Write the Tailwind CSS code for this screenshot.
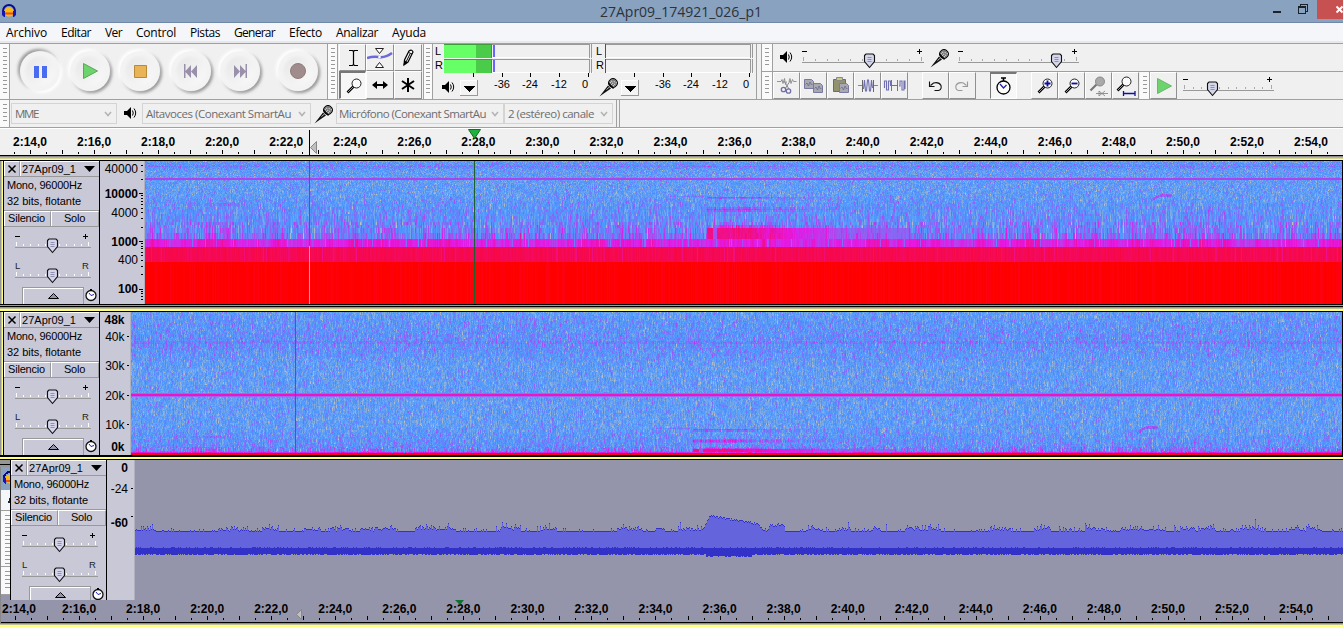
<!DOCTYPE html>
<html lang="es">
<head>
<meta charset="utf-8">
<title>27Apr09_174921_026_p1</title>
<script src="https://cdn.jsdelivr.net/npm/@tailwindcss/browser@4"></script>
</head>
<body class="w-[1343px] h-[627px] overflow-hidden bg-[#f0f0f0] font-['Liberation_Sans',sans-serif] text-black flex flex-col">

<svg class="hidden">
  <symbol id="speaker" viewBox="0 0 14 14"><path d="M1 5h3l4-4v12l-4-4H1z" fill="#000"/><path d="M9.500 4.500q1.500 2.500 0 5M11 2.500q3.400 4.500 0 9" fill="none" stroke="#000"/></symbol>
  <symbol id="mic" viewBox="0 0 20 20"><path d="M.5 19.500L9 8.500l3 3L4 17z" fill="#111"/><path d="M7.500 12.500l3.500-3" stroke="#bbb"/><circle cx="14" cy="6" r="4.500" fill="#777" stroke="#000"/><path d="M11 6l3-3M12 8l4-4M14 9l4-4" stroke="#eee" stroke-width="1.100" stroke-dasharray="1 1"/><path d="M9.500 6l5 5.500" stroke="#000" stroke-width="1.300"/></symbol>
  <symbol id="lens" viewBox="0 0 27 27"><path d="M7.500 19.500L14 13" stroke="#000" stroke-width="2.600"/><path d="M8 19L14 13" stroke="#aaa" stroke-width=".9"/><circle cx="16.500" cy="10.500" r="4.500" fill="#fafafa" stroke="#222" stroke-width="1"/></symbol>
  <symbol id="logo" viewBox="0 0 16 16"><circle cx="8" cy="9" r="4.700" fill="#fcb813"/><path d="M4 9.500h8v2H4z" fill="#ee4b1a"/><path d="M2 10V8a6 6 0 0 1 12 0v2" fill="none" stroke="#0a0a8c" stroke-width="2"/><path d="M1 8h3v6H3L1 12zM15 8h-3v6h1l2-2z" fill="#1616b4"/></symbol>
</svg>

<!-- Title bar -->
<header class="h-[23px] shrink-0 bg-[#88a2c0] border-b border-[#7088a8] flex items-start">
  <svg class="w-4 h-4 ml-px mt-[3px]"><use href="#logo"/></svg>
  <h1 class="flex-1 pl-[583px] text-[14px] leading-[23px] font-['Open_Sans',sans-serif] text-[#2d3239] whitespace-nowrap"><span data-w="162">27Apr09_174921_026_p1</span></h1>
  <svg class="w-[74px] h-[23px]" shape-rendering="crispEdges"><path d="M4 11h8v2H4z" fill="#1c222a"/><path d="M29.500 6.500h7v7h-7zM31.500 6v-1.500h7v7H37M29 7.500h8" fill="none" stroke="#1c222a"/><path d="M48 0h26v19H48z" fill="#c75050"/><path d="M67.500 6.500l6 6m-6 0l6-6" stroke="#fff" stroke-width="2" shape-rendering="auto"/></svg>
</header>

<!-- Menu -->
<nav class="h-[20px] shrink-0 bg-[#f5f6f9] border-b-2 border-[#e8e8ea] flex pl-[6px] text-[12px] leading-[20px] font-['Open_Sans',sans-serif] whitespace-nowrap">
  <div class="w-[55px]"><span data-w="41">Archivo</span></div>
  <div class="w-[44px]"><span data-w="30">Editar</span></div>
  <div class="w-[31px]"><span data-w="17">Ver</span></div>
  <div class="w-[54px]"><span data-w="40">Control</span></div>
  <div class="w-[44px]"><span data-w="30">Pistas</span></div>
  <div class="w-[55px]"><span data-w="41">Generar</span></div>
  <div class="w-[47px]"><span data-w="33">Efecto</span></div>
  <div class="w-[56px]"><span data-w="42">Analizar</span></div>
  <div><span data-w="34">Ayuda</span></div>
</nav>

<!-- Toolbars -->
<section class="h-[57px] shrink-0 border-t border-b border-[#a0a0a0] flex">
  <div class="w-[10px] bg-[#fafafa] border-r border-[#a0a0a0] pt-[4px] pl-[3px]"><div class="w-[4px] h-[47px] bg-[repeating-linear-gradient(#999_0_1px,transparent_1px_4px)]"></div></div>
  <div class="w-[318px] border-r border-[#a0a0a0]" id="transport"></div>
  <div class="w-[10px] bg-[#fafafa] border-r border-[#a0a0a0] pt-[4px] pl-[3px]"><div class="w-[4px] h-[47px] bg-[repeating-linear-gradient(#999_0_1px,transparent_1px_4px)]"></div></div>
  <!-- Edit tools -->
  <div class="w-[86px] pl-px grid grid-cols-[27px_28px_28px] grid-rows-[27px_28px] border-r border-[#a0a0a0]">
    <div class="border-t border-l border-white border-r border-b border-r-[#909090] border-b-[#909090]"><svg class="w-[26px] h-[26px]"><path d="M9 5.500h3.500l1 1 1-1H18M13.500 6v14M9 20.500h3.500l1-1 1 1H18" fill="none" stroke="#000" stroke-width="1.200"/></svg></div>
    <div class="border-t border-l border-white border-r border-b border-r-[#909090] border-b-[#909090]"><svg class="w-[26px] h-[26px]"><path d="M0 13q6-2 12-1t13-4" fill="none" stroke="#6a6ad8" stroke-width="2.500"/><path d="M8.500 3.500h8l-4 5zM8.500 22.500h8l-4-5z" fill="#fff" stroke="#222"/><circle cx="12.500" cy="12" r="1.300" fill="#fff"/></svg></div>
    <div class="border-t border-l border-white border-r border-b border-r-[#909090] border-b-[#909090]"><svg class="w-[26px] h-[26px]"><path d="M9 20l.5-5L14 6q3-2 4 1l-5 10z" fill="#fff" stroke="#000" stroke-width="1.200"/><path d="M9 20l1-4 2 1zM13.500 7.500l3.500 1.500M15 9l-3.500 7" stroke="#000"/></svg></div>
    <div class="border-t-2 border-l-2 border-[#777] border-r border-b border-r-white border-b-white bg-[#f7f7f7]"><svg class="w-[25px] h-[25px]" viewBox="1 0 25 25"><use href="#lens" width="27" height="27"/></svg></div>
    <div class="border-t border-l border-white border-r border-b border-r-[#909090] border-b-[#909090]"><svg class="w-[26px] h-[26px]"><path d="M6 13h14" stroke="#000" stroke-width="2"/><path d="M5 13l5-4v8zM21 13l-5-4v8z"/></svg></div>
    <div class="border-t border-l border-white border-r border-b border-r-[#909090] border-b-[#909090]"><svg class="w-[26px] h-[26px]"><path d="M13 6v14M7 9l12 8M7 17l12-8" stroke="#000" stroke-width="2"/></svg></div>
  </div>
  <div class="w-[9px] bg-[#fafafa] border-r border-[#a0a0a0] pt-[4px] pl-[2px]"><div class="w-[4px] h-[47px] bg-[repeating-linear-gradient(#999_0_1px,transparent_1px_4px)]"></div></div>
  <!-- Level meters -->
  <svg class="w-[328px] h-[55px] shrink-0" viewBox="-0.5 0 328 55" id="meters"></svg>
  <!-- Mixer, edit, transcription -->
  <div class="flex-1 flex flex-col border-l border-[#a0a0a0]">
    <div class="h-[28px] flex border-b border-[#a0a0a0]">
      <div class="w-[11px] bg-[#fafafa] border-r border-[#a0a0a0] pt-[4px] pl-[3px]"><div class="w-[4px] h-[20px] bg-[repeating-linear-gradient(#999_0_1px,transparent_1px_4px)]"></div></div>
      <svg class="w-[14px] h-[14px] ml-[6px] mt-[6px]"><use href="#speaker"/></svg>
      <svg class="w-[137px] h-[26px]" data-slider="9,131,18,76,13"></svg>
      <svg class="w-[20px] h-[20px] mt-[4px]"><use href="#mic"/></svg>
      <svg class="w-[140px] h-[26px]" data-slider="8,129,18,106,13"></svg>
    </div>
    <div class="h-[27px] flex" id="editbar"></div>
  </div>
</section>

<section class="h-[28px] shrink-0 border-b border-[#a0a0a0] flex text-[11.5px] text-[#6d6d6d] font-['Open_Sans',sans-serif] whitespace-nowrap">
  <div class="w-[10px] bg-[#fafafa] border-r border-[#a0a0a0] pt-[4px] pl-[3px]"><div class="w-[4px] h-[19px] bg-[repeating-linear-gradient(#999_0_1px,transparent_1px_4px)]"></div></div>
  <div class="ml-px mt-[3px] w-[106px] h-[21px] border border-[#d4d4d4] flex items-center justify-between pl-[3px] pr-[4px]"><span data-w="23">MME</span><svg class="w-[8px] h-[6px] shrink-0"><path d="M1 1l3 3.500L7 1" fill="none" stroke="#b4b4b4" stroke-width="1.600"/></svg></div>
  <svg class="w-[14px] h-[14px] ml-[6px] mt-[6px]"><use href="#speaker"/></svg>
  <div class="ml-[5px] mt-[3px] w-[169px] h-[21px] border border-[#d4d4d4] flex items-center justify-between pl-[3px] pr-[4px]"><span data-w="145">Altavoces (Conexant SmartAu</span><svg class="w-[8px] h-[6px] shrink-0"><path d="M1 1l3 3.500L7 1" fill="none" stroke="#b4b4b4" stroke-width="1.600"/></svg></div>
  <svg class="w-[20px] h-[20px] ml-[3px] mt-[4px]"><use href="#mic"/></svg>
  <div class="ml-[2px] mt-[3px] w-[168px] h-[21px] border border-[#d4d4d4] flex items-center justify-between pl-[2px] pr-[4px]"><span data-w="147">Micrófono (Conexant SmartAu</span><svg class="w-[8px] h-[6px] shrink-0"><path d="M1 1l3 3.500L7 1" fill="none" stroke="#b4b4b4" stroke-width="1.600"/></svg></div>
  <div class="mt-[3px] w-[109px] h-[21px] border border-[#d4d4d4] flex items-center justify-between pl-[3px] pr-[4px]"><span data-w="86">2 (estéreo) canale</span><svg class="w-[8px] h-[6px] shrink-0"><path d="M1 1l3 3.500L7 1" fill="none" stroke="#b4b4b4" stroke-width="1.600"/></svg></div>
  <div class="ml-[3px] w-[4px] border-x border-[#a0a0a0]"></div>
</section>

<!-- Timeline -->
<svg class="w-full h-[28px] shrink-0 border-t border-white" id="timeline"></svg>

<!-- Track 1 -->
<div class="h-[5px] shrink-0 bg-[linear-gradient(#8c8c8c_0_1px,#b4b4a0_1px_2px,#d6d68c_2px_3px,#ffff80_3px_4px,#000_4px)]"></div>
<section class="h-[143px] shrink-0 flex">
  <div class="w-[4px] bg-[linear-gradient(to_right,#969696_0_1px,#c4c49a_1px_2px,#ffff80_2px_3px,#000_3px)]"></div>
  <div class="w-[95px] bg-[#c8c8d7] overflow-hidden" data-panel></div>
  <svg class="w-[46px] h-[143px] bg-[#c8c8d7] border-l border-black" id="scale1"></svg>
  <canvas id="spec1" width="1197" height="143" class="w-[1198px] h-[143px] border-r border-black"></canvas>
</section>
<div class="h-[8px] shrink-0 bg-[linear-gradient(#000_0_1px,#9c9c9c_1px_2px,#000_2px_3px,#969696_3px_4px,#c0c098_4px_5px,#ffff80_5px_7px,#000_7px)]"></div>

<!-- Track 2 -->
<section class="h-[143px] shrink-0 flex">
  <div class="w-[4px] bg-[linear-gradient(to_right,#969696_0_1px,#c4c49a_1px_2px,#ffff80_2px_3px,#000_3px)]"></div>
  <div class="w-[95px] bg-[#c8c8d7] overflow-hidden" data-panel></div>
  <svg class="w-[32px] h-[143px] bg-[#c8c8d7] border-l border-black" id="scale2"></svg>
  <canvas id="spec2" width="1211" height="143" class="w-[1212px] h-[143px] border-r border-black"></canvas>
</section>
<div class="h-[5px] shrink-0 bg-[linear-gradient(#000_0_2px,#ffff80_2px_4px,#000_4px)]"></div>

<!-- Track 3 -->
<section class="h-[140px] shrink-0 flex bg-[#9494aa]">
  <svg class="w-[10px] h-[140px] bg-[#f0f0f0]" shape-rendering="crispEdges">
    <path d="M0 0h10v7H0z" fill="#969696"/><path d="M0 4h10v1H0z"/><path d="M1 7h9v23H1z" fill="#88a2c0"/><path d="M1 30h9v20H1z" fill="#f5f6f9"/>
    <use href="#logo" x="2" y="10" width="16" height="16"/><path d="M8 43l2-6v6" fill="#222"/>
    <path d="M1 50h9v1H1zM1 106h9v1H1zM1 134h9v1H1z" fill="#a0a0a0"/><path d="M0 7h1v133H0z" fill="#888"/>
    <path d="M1 51h9v55H1zM1 107h9v27H1z" fill="#fafafa"/><path d="M7 55v49M7 111v20" stroke="#999" stroke-width="5" stroke-dasharray="1 3"/>
    <path d="M1 135h9v5H1z" fill="#9494aa"/>
  </svg>
  <div class="w-[96px] bg-[#c8c8d7] border-l border-black overflow-hidden" data-panel></div>
  <svg class="w-[29px] h-[140px] bg-[#c8c8d7] border-l border-black" id="scale3"></svg>
  <canvas id="wave" width="1208" height="140" class="w-[1208px] h-[140px]"></canvas>
</section>
<svg class="w-full h-[23px] shrink-0 bg-[#9494aa]" id="timeline2"></svg>
<div class="h-[4px] shrink-0 bg-[linear-gradient(#8c8c8c_0_1px,#c0c098_1px_2px,#ffff80_2px)]"></div>

<script>
const $ = id => document.getElementById(id);

/* Slider: x0..x1 groove at y, thumb at t */
function slider(x0, x1, y, t, n, tick, labels) {
  let s = `<g shape-rendering="crispEdges"><path d="M${x0} ${y}h${x1 - x0}v1h${x0 - x1}z" fill="#999"/>`;
  for (let i = 0; i < n; i++) {
    const x = Math.round(x0 + 1 + i * (x1 - x0 - 4) / (n - 1)), h = (i == 0 || i == n - 1) ? 5 : 3;
    s += `<path d="M${x} ${y - h}h1v${h - 1}h-1z" fill="${tick}"/>`;
  }
  s += '</g>' + labels;
  y += 1;
  return s + `<path d="M${t - 5} ${y - 7.500}l1.500-1.500h7l1.500 1.500v6l-5 6-5-6z" fill="#d4d4ea" stroke="#111" stroke-width="1.100"/><path d="M${t - 2} ${y - 5.500}h4M${t - 2} ${y - 3.500}h4M${t - 2} ${y - 1.500}h4" stroke="#8888a8" stroke-width=".9"/>`;
}
const signs = (x0, x1, y) => `<path d="M${x0} ${y}h5M${x1 - 6} ${y}h5M${x1 - 3.500} ${y - 2.500}v5" stroke="#000"/>`;

document.querySelectorAll('[data-panel]').forEach(p => {
  p.innerHTML = `
  <div class="h-[16px] flex border-b border-[#999]">
    <div class="w-[16px] border-t border-l border-white border-r border-r-[#999]"><svg class="w-[14px] h-[14px]"><path d="M3.500 3.500l7 7m0-7l-7 7" stroke="#000" stroke-width="1.500"/></svg></div>
    <div class="flex-1 border-t border-l border-white flex items-center justify-between pl-px pr-[4px] text-[11px] leading-[14px]"><span data-w="54">27Apr09_1</span><svg class="w-[11px] h-[6px] shrink-0"><path d="M0 0h11L5.500 6z"/></svg></div>
  </div>
  <div class="h-[34px] pl-[3px] text-[11px] leading-[16px] whitespace-nowrap border-b border-[#999]"><div><span data-w="75">Mono, 96000Hz</span></div><div><span data-w="74">32 bits, flotante</span></div></div>
  <div class="h-[16px] flex text-[11px] leading-[13px] text-center border-b border-[#999]">
    <div class="w-[47px] border-t border-l border-white border-r border-r-[#999] pr-[2px]"><span data-w="37">Silencio</span></div><div class="flex-1 border-t border-l border-white border-r border-r-[#999] pr-px"><span data-w="21">Solo</span></div>
  </div>
  <svg class="w-[95px] h-[60px]">${slider(11, 87, 20, 48.500, 11, '#fff', signs(11, 85, 9.500))}${slider(11, 87, 50, 48.500, 11, '#fff', '<text x="11" y="42" font-size="9.500" fill="#222">L</text><text x="78" y="42" font-size="9.500" fill="#222">R</text>')}</svg>
  <div class="flex pl-[18px]">
    <div class="w-[62px] h-[17px] border border-b-0 border-[#999] shadow-[inset_1px_1px_#fff]"><svg class="w-[60px] h-[16px]"><path d="M25.500 10.500h10l-5-5z" fill="#9494aa" stroke="#000"/></svg></div>
    <svg class="w-[14px] h-[16px]"><circle cx="7" cy="8.500" r="5" fill="#fff" stroke="#111" stroke-width="1.300"/><path d="M7 8.500L5 6m2 2.500l3-1" stroke="#22a"/><path d="M6 2h2v2H6z"/></svg>
  </div>`;
});

document.querySelectorAll('[data-slider]').forEach(e => {
  const [a, b, y, t, n] = e.dataset.slider.split(',').map(Number);
  e.innerHTML = slider(a, b, y, t + .5, 11, '#aaa', signs(a, b - 1, 7.500));
});

/* Transport buttons */
{
  let s = `<svg class="w-[317px] h-[55px]"><defs><filter id="soft" x="-30%" y="-30%" width="160%" height="160%"><feGaussianBlur stdDeviation="1.600"/></filter><linearGradient id="bt" x1="0" y1="0" x2="1" y2="1"><stop offset="0" stop-color="#e6e6e6"/><stop offset="1" stop-color="#fafafa"/></linearGradient></defs>`;
  [30, 80, 130, 181, 230, 288].forEach((x, i) => {
    const d = i ? 1.600 : -1.600;
    s += `<circle cx="${x + d}" cy="${27 + d}" r="20.500" fill="#969696" filter="url(#soft)"/><circle cx="${x - d}" cy="${27 - d}" r="20.500" fill="#fff" filter="url(#soft)"/><circle cx="${x}" cy="27" r="20" fill="#f3f3f3"/><circle cx="${x}" cy="27" r="14.500" fill="url(#bt)" filter="url(#soft)"/>`;
  });
  s += `<path d="M24 22h5v12h-5zM32 22h5v12h-5z" fill="#4a6cf0"/><path d="M73.500 19.500v15l14-7.500z" fill="#6dd46d" stroke="#58a858"/><path d="M124.500 21.500h12v12h-12z" fill="#e8b455" stroke="#b88a38"/>
  <g fill="#9a90ac"><path d="M174 20h1.500v14H174zM181 21v13l-6-6.500zM187 21v13l-6-6.500z"/><path d="M237 20h-1.500v14h1.500zM224 21v13l6-6.500zM230 21v13l6-6.500z"/></g><circle cx="288" cy="27" r="7.500" fill="#a08c8c" stroke="#907c7c"/></svg>`;
  $('transport').innerHTML = s;
}

/* Meters, origin at x=434 */
{
  const m = $('meters');
  m.setAttribute('viewBox', '-1 0 328 55');
  let s = '<g shape-rendering="crispEdges">';
  const T = (x, y, t, a) => `<text x="${x}" y="${y}" font-size="11" text-anchor="${a || 'middle'}">${t}</text>`;
  [[0, 10], [161, 171]].forEach(([o, b], i) => {
    s += T(o + 1, 11, 'L', 'start') + T(o + 1, 25, 'R', 'start');
    [0, 15].forEach(y => {
      const e = b + 146;
      s += `<path d="M${b} ${y + .5}H${e}" stroke="#999"/><path d="M${b} ${y + 14 - .5}H${e + 3}" stroke="#fff"/><path d="M${e - .5} ${y}v14M${e + 1.500} ${y}v14" stroke="#999"/>`;
      if (!i) s += `<path d="M10 ${y}h33v14H10z" fill="#66ff66"/><path d="M42 ${y}h16v14H42z" fill="#4acc4a"/><path d="M10 ${y + .5}h47.500v13.500" fill="none" stroke="#3d9a3d"/><path d="M59 ${y + 1}h2v12h-2z" fill="#6666ff"/>`;
      else s += `<path d="M${b} ${y}h1v14h-1z" fill="#a03030"/>`;
    });
    for (let k = 0; k < 5; k++) s += `<path d="M${Math.round(o + 39 + k * 28.700)} 29h1v4h-1z"/>`;
    s += T(o + 68, 44, '-36') + T(o + 96, 44, '-24') + T(o + 125, 44, '-12') + T(o + 151, 44, '0');
    s += `<path d="M${o + 26} 36h17v15h-17z" fill="#f4f4f4"/><path d="M${o + 26.500} 51v-14.500h17" fill="none" stroke="#fff"/><path d="M${o + 26} 51.500h17.500V36" fill="none" stroke="#999"/><path d="M${o + 29} 42h12l-6 6z"/>`;
  });
  s += `<path d="M322.500 0v56" stroke="#a0a0a0"/></g><use href="#speaker" x="7" y="36" width="14" height="14"/><use href="#mic" x="165" y="33" width="20" height="20"/>`;
  m.innerHTML = s;
}

/* Edit bar */
{
  const grip = `<div class="w-[10px] bg-[#fafafa] border-r border-[#a0a0a0] pt-[4px] pl-[3px]"><div class="w-[4px] h-[20px] bg-[repeating-linear-gradient(#999_0_1px,transparent_1px_4px)]"></div></div>`;
  const btn = g => `<div class="w-[27px] border-t border-l border-white border-r border-b border-r-[#909090] border-b-[#909090]"><svg class="w-[25px] h-[25px]">${g}</svg></div>`;
  const gap = { a: '<div class="w-[14px]"></div>', b: '<div class="w-[14px]"></div>', c: '<div class="w-[14px]"></div>', d: '<div class="w-px"></div>' };
  const page = (x, y) => `<path d="M${x} ${y}h7l2 2v7h-9z" fill="#a8a8b0" stroke="#7878a0"/><path d="M${x + 1} ${y + 5}l1.500-1.500 1.500 3 1.500-4 1.500 3 1-1" fill="none" stroke="#666688" stroke-width=".7"/>`;
  $('editbar').innerHTML = `<div class="w-[11px] bg-[#fafafa] border-r border-[#a0a0a0] pt-[4px] pl-[3px]"><div class="w-[4px] h-[20px] bg-[repeating-linear-gradient(#999_0_1px,transparent_1px_4px)]"></div></div>` +
    btn('<path d="M3 8.500h4l1-2 1 4 1.500-5 1 6 1-3M15 8.500l1-3 1 5 1.500-4 1 2h3" fill="none" stroke="#888" stroke-width=".9"/><path d="M10 8l5 8M16 8l-5 8" stroke="#888"/><circle cx="9.500" cy="16.500" r="2.200" fill="none" stroke="#7070a8" stroke-width="1.300"/><circle cx="14.500" cy="18" r="2.200" fill="none" stroke="#7070a8" stroke-width="1.300"/>') +
    btn(page(3.500, 6.500) + page(12.500, 10.500)) +
    btn('<path d="M5.500 6.500h12v12h-12z" fill="#92926e" stroke="#6e6e58"/><path d="M8.500 7.500v-3h6v3z" fill="#c8c888" stroke="#888"/>' + page(11.500, 10.500)) +
    btn('<path d="M3 12.500h4M18 12.500h5" stroke="#888"/><path d="M7.500 7v12M18.500 7v12" stroke="#666"/><path d="M8.500 16l1-9 1 11h1l1-11h1l1 11h1l1-11 1 8" fill="none" stroke="#7070b0" stroke-width="1.100"/>') +
    btn('<path d="M2.500 15V8h2v9h2V8h2v5M17 13h1V8h2v9h2V8h1v8" fill="none" stroke="#7070b0" stroke-width="1.100"/><path d="M9.500 7v11M15.500 7v11M10 12.500h5" stroke="#777"/>') +
    gap.a + btn('<path d="M11.500 17.500h4q3.500-1 2.500-5-2-4-7.500-2.500l-3 2.500M6.500 8.500v5h5" fill="none" stroke="#111" stroke-width="1.100"/>') +
    btn('<path d="M12.500 17.500h-4q-3.500-1-2.500-5 2-4 7.500-2.500l3 2.500M17.500 8.500v5h-5" fill="none" stroke="#999" stroke-width="1.100"/>') +
    gap.b + `<div class="w-[27px] border-t-2 border-l border-[#777] border-r border-b border-r-white border-b-white bg-[#f7f7f7]"><svg class="w-[25px] h-[24px]"><circle cx="12.500" cy="13.500" r="6.500" fill="#fff" stroke="#000" stroke-width="1.300"/><path d="M10 4h5M12.500 4v3" stroke="#000" stroke-width="1.600"/><path d="M9 10l3.500 4 3-3" fill="none" stroke="#22a" stroke-width="1.300"/></svg></div>` + gap.c +
    btn('<use href="#lens" width="27" height="27" x="-1"/><path d="M12.500 10.500h6M15.500 7.500v6" stroke="#1010a0" stroke-width="1.800"/>') +
    btn('<use href="#lens" width="27" height="27" x="-1"/><path d="M12.500 10.500h6" stroke="#1010a0" stroke-width="1.800"/>') +
    btn('<path d="M4.500 17.500l6-6" stroke="#777" stroke-width="2.200"/><circle cx="14" cy="8.500" r="4.500" fill="#aaa" stroke="#888"/><path d="M10 20.500h12M13 18l3 2.500-3 2.500zM19 18l-3 2.500 3 2.500" stroke="#888" stroke-width=".9" fill="none"/>') +
    btn('<use href="#lens" width="27" height="27" x="-3" y="-2"/><path d="M10 20.500h12M10.500 18v5M22 18v5" stroke="#1010a0" stroke-width="1.300"/>') +
    gap.d + grip +
    btn('<path d="M6.500 5.500v15l14-7.500z" fill="#6dd46d" stroke="#68b868"/>') +
    `<svg class="w-[104px] h-[26px]">${slider(6, 97, 18, 35.500, 11, '#aaa', signs(6, 96, 7.500))}</svg>`;
}

/* Timelines */
function ruler(el, first, labelY, tickBottom, n) {
  let s = '';
  for (let i = 0; i < n; i++) {
    const x = first + i * 64.050;
    s += `<text x="${Math.max(x, 19)}" y="${labelY}" font-size="12" font-weight="bold" text-anchor="middle">2:${14 + 2 * i},0</text>`;
  }
  for (let k = -1; k < 90; k++) {
    const x = Math.round(first + k * 16.012), h = k % 2 ? 2 : 4;
    s += `<path d="M${x} ${tickBottom - h}h1v${h}h-1z"/>`;
  }
  el.innerHTML = s;
}
ruler($('timeline'), 30, 17, 25, 21);
$('timeline').innerHTML += '<path d="M0 26h1343v1H0zM309 1h1v26h-1z"/><path d="M310.500 18.500l6-6v12z" fill="#c0c0c0" stroke="#888"/><path d="M468.500.500h12l-6 9z" fill="#20b040" stroke="#107020"/>';
ruler($('timeline2'), 15, 13, 20, 22);
$('timeline2').innerHTML += '<path d="M0 22h1343v1H0z"/><path d="M296.500 14.500l5-5v10z" fill="#c0c0c0" stroke="#888"/><path d="M455 0h9l-4 5z" fill="#107030"/><path d="M0 0h1v23H0z" fill="#888"/>';

/* Vertical scales */
{
  const lab = (x, y, t, b) => `<text x="${x}" y="${y + 4.500}" font-size="12" text-anchor="end" ${b ? 'font-weight="bold"' : ''}>${t}</text>`;
  let s = [['40000', 7, 0], ['10000', 32, 1], ['4000', 51, 0], ['1000', 80, 1], ['400', 98, 0], ['100', 127, 1]].map(a => lab(38, a[1], a[0], a[2])).join('');
  for (let d = 10; d <= 10000; d *= 10) for (let m = 1; m < 10; m++) {
    const f = d * m, y = Math.round(80 - 47.700 * Math.log10(f / 1000));
    if (y > 1 && y < 142) s += `<path d="M${m == 1 ? 39 : 41} ${y}h${m == 1 ? 4 : 2}v1h-${m == 1 ? 4 : 2}z"/>`;
  }
  $('scale1').innerHTML = s + '<path d="M44 0h1v143h-1z" fill="#b0b0be"/>';
  $('scale2').innerHTML = [['48k', 7, 1], ['40k', 24, 0], ['30k', 53, 0], ['20k', 83, 0], ['10k', 112, 0], ['0k', 134, 1]].map(a => lab(24.500, a[1], a[0], a[2]) + (a[2] ? '' : `<path d="M27 ${a[1]}h2v1h-2z"/>`)).join('') + '<path d="M30 0h1v143h-1z" fill="#b0b0be"/>';
  $('scale3').innerHTML = [['0', 7, 1], ['-24', 28, 0], ['-60', 62, 1]].map(a => lab(21, a[1], a[0], a[2])).join('') + '<path d="M24 28h2v1h-2zM24 56h2v1h-2z"/><path d="M27 0h1v140h-1z" fill="#b0b0be"/>';
}

/* Spectrum data: 128 bins of 375 Hz per column */
let seed = 20274921;
const rnd = () => {
  seed = (seed + 0x6D2B79F5) | 0;
  let r = Math.imul(seed ^ (seed >>> 15), 1 | seed);
  r = (r + Math.imul(r ^ (r >>> 7), 61 | r)) ^ r;
  return (((r ^ (r >>> 14)) >>> 0) + .5) / 4294967296;
};
const N = 1230, K = 128, V = [];
const ramp = (x, a, b) => Math.max(0, Math.min(1, (x - a) / (b - a)));
const bases = [];
for (let k = 0; k < K; k++) {
  let b;
  if (k < 3) b = .5; else if (k < 4) b = .355; else if (k < 5) b = .315; else if (k < 7) b = .295;
  else if (k < 24) b = .275 - .045 * ramp(k, 7, 24);
  else if (k < 80) b = .225; else b = .225 + .045 * ramp(k, 78, 96);
  if (k > 98 && k < 102) b = .31;
  if (k > 106) b = .27 - .025 * ramp(k, 106, 122);
  if (k > 123) b = .23;
  bases.push(b);
}
let slow = 0;
for (let t = 0; t < N; t++) {
  const col = new Float32Array(K), x = t + 131; /* x on the second track */
  const lf = rnd() - .5;
  let run = 0;
  slow = slow * .85 + (rnd() - .5) * .06;
  for (let k = 0; k < K; k++) {
    let e = rnd() + rnd() + rnd() - 1.500;
    if (rnd() < .06) e -= rnd() * 1.800;
    e = run = run * .5 + e * .92; /* neighbouring bins leak into each other */
    if (k == 0) { col[k] = .752 - .022 * Math.pow(rnd(), 3); continue; }
    if (k == 1) { col[k] = .66 + .03 * lf + (rnd() < .04 ? -.05 : 0); continue; }
    if (k == 2) { col[k] = .5 + .03 * e + slow - (rnd() < .06 ? .14 : 0); continue; }
    let v = bases[k] + .1 * e;
    if (k < 7) v += .03 * e + slow * .6;
    const dec = x < 693 ? 0 : x < 740 ? 1 : Math.exp(-(x - 740) / 40);
    if (dec > .02) {
      if (k == 3 || k == 4) v = Math.max(v, x > 698 && x < 703 ? .4 : .36 + .24 * dec + .03 * e);
      if (k == 5) v += .12 * dec;
      if (k == 12) v += .18 * dec; if (k == 13 || k == 11) v += .09 * dec;
      if (k == 21) v += .09 * dec; if (k == 22) v += .17 * dec;
    }
    if (x > 755 && x < 815 && k > 2 && k < 5) v += .05;
    if (x > 655 && x < 690 && k == 23) v += .09;
    if (x > 190 && x < 225 && (k == 15 || k == 16)) v += .06;
    if (x > 1136 && x < 1158 && Math.abs(k - (19 + Math.min(5, (x - 1136) / 2))) < 1.200) v += .14;
    col[k] = v;
  }
  V.push(col);
}
const stops = [[191, 191, 191], [76, 153, 255], [229, 25, 229], [255, 0, 0], [255, 255, 255]];
function color(v) {
  v = Math.max(0, Math.min(.75, v)) * 4;
  const i = Math.min(3, Math.floor(v)), f = v - i;
  return stops[i].map((c, j) => c + (stops[i + 1][j] - c) * f);
}
function draw(id, W, bin) {
  const c = $(id).getContext('2d'), im = c.createImageData(W, 143);
  for (let y = 0; y < 143; y++) {
    const i = Math.max(0, Math.min(127, Math.floor(bin(y))));
    for (let x = 0; x < W; x++) {
      const rgb = color(V[x][i]), p = (y * W + x) * 4;
      im.data[p] = rgb[0]; im.data[p + 1] = rgb[1]; im.data[p + 2] = rgb[2]; im.data[p + 3] = 255;
    }
  }
  c.putImageData(im, 0, 0);
  return c;
}
let c = draw('spec1', 1197, y => Math.pow(10, (80 - y) / 47.700) * 1000 / 375);
c.fillStyle = '#aa44ee'; c.fillRect(0, 17, 1197, 2);
c.fillStyle = '#6a5c50'; c.fillRect(164, 0, 1, 85);
c.fillStyle = '#60d8c8'; c.fillRect(164, 85, 1, 58);
c.fillStyle = '#1c6030'; c.fillRect(329, 0, 1, 143);
c = draw('spec2', 1211, y => (142.500 - y) / 143 * 128);
c.fillStyle = '#9a68f4'; c.fillRect(0, 81, 1211, 4);
c.fillStyle = '#ee14c4'; c.fillRect(0, 82, 1211, 2);
c.fillStyle = '#5c5c6c'; c.fillRect(164, 0, 1, 143);
c.fillStyle = '#ff0018'; c.fillRect(0, 141, 1211, 2);

/* Waveform in dB */
c = $('wave').getContext('2d');
c.fillStyle = '#9494aa'; c.fillRect(0, 0, 1208, 140);
const clusters = [[135, 156], [218, 248], [262, 278], [305, 320], [330, 350], [360, 395], [415, 455], [500, 520], [540, 555], [618, 640], [655, 664], [678, 702], [806, 822], [838, 850], [870, 880], [905, 940], [990, 1010], [1035, 1050], [1085, 1110], [1120, 1165], [1180, 1215], [1240, 1260], [1290, 1320]];
let lvl = 0;
for (let i = 0; i < 1208; i++) {
  const x = i + 135;
  let h = rnd() < .22 ? rnd() * 3.500 : 0;
  lvl = lvl * .6 + rnd() * 1.800;
  if (clusters.some(q => x >= q[0] && x <= q[1])) h = Math.max(0, lvl - 1 + rnd() * rnd() * 6);
  if (rnd() < .02) h += 4;
  if (x > 702 && x < 757) h = (x < 710 ? (x - 702) * 2 : 16 - (x - 710) * .17) + rnd() * 2.400 - 1.500;
  else if (x >= 757 && x < 785) h = rnd() * 3 + (x > 768 ? 5 : 0) + Math.max(0, 6 - (x - 757) * .9);
  const top = Math.round(71 - h), bot = 94 + Math.round(rnd() * 1.300) + (x > 705 && x < 752 ? 2 : 0), mid = rnd() < .25 ? 87 : 88;
  c.fillStyle = '#3232c8'; c.fillRect(i, top, 1, bot - top);
  c.fillStyle = '#6464dc'; c.fillRect(i, top + 1, 1, mid - top - 1);
}

/* Letter spacing brings each label to its nominal width; refitted whenever the page's styles change its size */
function fit() {
  document.querySelectorAll('[data-w]').forEach(e => {
    e.style.letterSpacing = '0px';
    const r = document.createRange();
    r.selectNodeContents(e);
    e.style.letterSpacing = ((e.dataset.w - r.getBoundingClientRect().width) / e.textContent.length) + 'px';
  });
}
fit();
addEventListener('load', fit);
new ResizeObserver(fit).observe(document.body);
[50, 200].forEach(t => setTimeout(fit, t));
</script>
</body>
</html>
